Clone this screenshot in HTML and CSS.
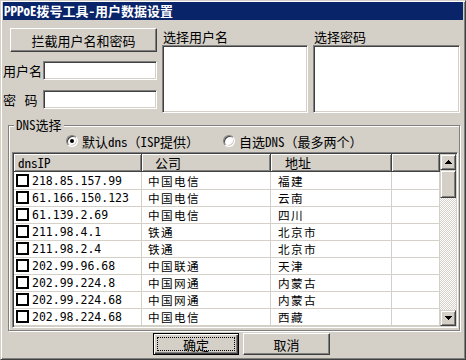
FILE: index.html
```html
<!DOCTYPE html>
<html lang="zh-CN">
<head>
<meta charset="utf-8">
<title>PPPoE拨号工具-用户数据设置</title>
<link rel="stylesheet" href="styles.css">
</head>
<body>
<div class="window">
  <div class="titlebar">PPPoE拨号工具-用户数据设置</div>
  <div class="content">
    <div class="top">
      <div class="leftcol">
        <button class="btn intercept">拦截用户名和密码</button>
        <div class="field"><span class="lbl">用户名</span><span class="edit"></span></div>
        <div class="field f2"><span class="lbl sp">密 码</span><span class="edit"></span></div>
      </div>
      <div class="pick users"><div class="plbl">选择用户名</div><div class="listbox edit"></div></div>
      <div class="pick pwds"><div class="plbl">选择密码</div><div class="listbox edit"></div></div>
    </div>
    <fieldset class="group">
      <legend>DNS选择</legend>
      <div class="radios">
        <span class="radio checked"></span><span class="rtext">默认dns（ISP提供）</span>
        <span class="radio r2"></span><span class="rtext">自选DNS（最多两个）</span>
      </div>
      <div class="listview">
        <div class="lv-main">
          <div class="lv-head">
            <div class="hc c1">dnsIP</div>
            <div class="hc c2">公司</div>
            <div class="hc c3">地址</div>
            <div class="hc c4"></div>
          </div>
          <div class="row"><div class="cell c1"><span class="chk"></span><span class="ip">218.85.157.99</span></div><div class="cell c2">中国电信</div><div class="cell c3">福建</div><div class="cell c4"></div></div>
          <div class="row"><div class="cell c1"><span class="chk"></span><span class="ip">61.166.150.123</span></div><div class="cell c2">中国电信</div><div class="cell c3">云南</div><div class="cell c4"></div></div>
          <div class="row"><div class="cell c1"><span class="chk"></span><span class="ip">61.139.2.69</span></div><div class="cell c2">中国电信</div><div class="cell c3">四川</div><div class="cell c4"></div></div>
          <div class="row"><div class="cell c1"><span class="chk"></span><span class="ip">211.98.4.1</span></div><div class="cell c2">铁通</div><div class="cell c3">北京市</div><div class="cell c4"></div></div>
          <div class="row"><div class="cell c1"><span class="chk"></span><span class="ip">211.98.2.4</span></div><div class="cell c2">铁通</div><div class="cell c3">北京市</div><div class="cell c4"></div></div>
          <div class="row"><div class="cell c1"><span class="chk"></span><span class="ip">202.99.96.68</span></div><div class="cell c2">中国联通</div><div class="cell c3">天津</div><div class="cell c4"></div></div>
          <div class="row"><div class="cell c1"><span class="chk"></span><span class="ip">202.99.224.8</span></div><div class="cell c2">中国网通</div><div class="cell c3">内蒙古</div><div class="cell c4"></div></div>
          <div class="row"><div class="cell c1"><span class="chk"></span><span class="ip">202.99.224.68</span></div><div class="cell c2">中国网通</div><div class="cell c3">内蒙古</div><div class="cell c4"></div></div>
          <div class="row"><div class="cell c1"><span class="chk"></span><span class="ip">202.98.224.68</span></div><div class="cell c2">中国电信</div><div class="cell c3">西藏</div><div class="cell c4"></div></div>
        </div>
        <div class="scrollbar">
          <div class="sb-btn"><svg width="7" height="4" viewBox="0 0 7 4"><path d="M3 0h1v1h1v1h1v1h1v1H0V3h1V2h1V1h1z"/></svg></div>
          <div class="sb-thumb"></div>
          <div class="sb-track"></div>
          <div class="sb-btn"><svg width="7" height="4" viewBox="0 0 7 4"><path d="M0 0h7v1H6v1H5v1H4v1H3V3H2V2H1V1H0z"/></svg></div>
        </div>
      </div>
    </fieldset>
    <div class="actions">
      <button class="btn ok">确定</button>
      <button class="btn cancel">取消</button>
    </div>
  </div>
</div>
</body>
</html>
```

FILE: styles.css
```css
html, body {
  margin: 0;
  padding: 0;
  background: #d4d0c8;
}
body {
  font-family: "Noto Sans Mono CJK SC", "Noto Sans CJK SC", "DejaVu Sans Mono", monospace;
  font-size: 13px;
  color: #000;
}
.window {
  width: 466px;
  height: 360px;
  box-sizing: border-box;
  background: #d4d0c8;
  border: 1px solid;
  border-color: #d4d0c8 #404040 #404040 #d4d0c8;
  box-shadow: inset 1px 1px #fff, inset -1px -1px #808080;
  padding: 1px 2px 2px 2px;
}
.titlebar {
  height: 18px;
  line-height: 18px;
  background: #0a246a;
  color: #fff;
  font-weight: bold;
  padding-left: 1px;
  white-space: nowrap;
}
.content {
  display: flex;
  flex-direction: column;
}
.top {
  display: flex;
  gap: 5px;
  padding-top: 8px;
}
.leftcol {
  width: 154px;
  display: flex;
  flex-direction: column;
}
.btn {
  box-sizing: border-box;
  background: #d4d0c8;
  border: 1px solid;
  border-color: #fff #404040 #404040 #fff;
  box-shadow: inset -1px -1px #808080, inset 1px 1px #d4d0c8;
  font: inherit;
  color: #000;
  padding: 0;
  margin: 0;
}
.intercept {
  margin-left: 7px;
  width: 147px;
  height: 24px;
}
.field {
  display: flex;
  align-items: center;
  margin-top: 9px;
}
.field.f2 {
  margin-top: 10px;
}
.lbl {
  width: 40px;
  white-space: pre;
  line-height: 17px;
}
.lbl.sp {
  word-spacing: 2px;
}
.edit {
  box-sizing: border-box;
  display: block;
  background: #fff;
  border: 1px solid;
  border-color: #808080 #fff #fff #808080;
  box-shadow: inset 1px 1px #404040, inset -1px -1px #d4d0c8;
}
.field .edit {
  width: 114px;
  height: 19px;
}
.pick.users {
  width: 146px;
}
.pick.pwds {
  width: 147px;
}
.plbl {
  height: 17px;
  line-height: 17px;
  padding-left: 1px;
}
.listbox {
  height: 68px;
}
.group {
  box-sizing: border-box;
  width: 452px;
  margin: 5px 0 0 5px;
  padding: 0 1px 2px 3px;
  border: 1px solid #808080;
  box-shadow: inset 1px 1px #fff, 1px 1px #fff;
  min-width: 0;
}
.group legend {
  margin-left: 2px;
  padding: 0 2px;
  line-height: 14px;
  background: #d4d0c8;
}
.radios {
  height: 18px;
  display: flex;
  align-items: center;
  padding-left: 54px;
}
.radio {
  box-sizing: border-box;
  width: 12px;
  height: 12px;
  border-radius: 50%;
  border: 1px solid;
  border-color: #808080 #fff #fff #808080;
  box-shadow: inset 1px 1px #404040, inset -1px -1px #d4d0c8;
  background: #fff;
  margin-right: 4px;
  display: flex;
  align-items: center;
  justify-content: center;
}
.radio.checked::after {
  content: "";
  width: 4px;
  height: 4px;
  border-radius: 50%;
  background: #000;
}
.radio.r2 {
  margin-left: 24px;
}
.rtext {
  line-height: 17px;
}
.listview {
  margin-top: 2px;
  height: 176px;
  box-sizing: border-box;
  display: flex;
  background: #fff;
  border: 1px solid;
  border-color: #808080 #fff #fff #808080;
  box-shadow: inset 1px 1px #404040, inset -1px -1px #d4d0c8;
  padding: 1px;
}
.lv-main {
  width: 426px;
}
.lv-head, .row {
  display: grid;
  grid-template-columns: 128px 129px 121px 48px;
}
.lv-head {
  height: 18px;
}
.hc {
  box-sizing: border-box;
  background: #d4d0c8;
  border-right: 1px solid #404040;
  border-bottom: 1px solid #404040;
  box-shadow: inset 1px 1px #fff, inset -1px -1px #808080;
  line-height: 17px;
  white-space: nowrap;
}
.hc.c1 { padding-left: 4px; }
.hc.c2 { padding-left: 13px; }
.hc.c3 { padding-left: 14px; }
.row {
  height: 17px;
}
.cell {
  box-sizing: border-box;
  border-right: 1px solid #d4d0c8;
  border-bottom: 1px solid #d4d0c8;
  line-height: 16px;
  white-space: nowrap;
  display: flex;
  align-items: center;
}
.cell.c1 { padding-left: 2px; }
.cell.c2 { padding-left: 6px; }
.cell.c3 { padding-left: 7px; }
.cell.c2, .cell.c3 {
  font-size: 11.6px;
  letter-spacing: 1.4px;
  padding-top: 1px;
}
.ip {
  font-family: "DejaVu Sans Mono", "Liberation Mono", monospace;
  font-size: 11.5px;
  line-height: 14px;
  padding-top: 1px;
}
.chk {
  box-sizing: border-box;
  width: 13px;
  height: 13px;
  border: 2px solid #000;
  background: #fff;
  margin-right: 3px;
  flex: none;
}
.scrollbar {
  width: 16px;
  display: flex;
  flex-direction: column;
}
.sb-btn, .sb-thumb {
  box-sizing: border-box;
  background: #d4d0c8;
  border: 1px solid;
  border-color: #d4d0c8 #404040 #404040 #d4d0c8;
  box-shadow: inset 1px 1px #fff, inset -1px -1px #808080;
}
.sb-btn {
  height: 16px;
  display: flex;
  align-items: center;
  justify-content: center;
}
.sb-btn svg {
  display: block;
  fill: #000;
}
.sb-thumb {
  height: 28px;
}
.sb-track {
  flex: 1;
  background: repeating-conic-gradient(#d4d0c8 0 25%, #fff 0 50%) 0 0 / 2px 2px;
}
.actions {
  display: flex;
  margin-top: 2px;
  padding-left: 150px;
  gap: 4px;
}
.ok {
  width: 86px;
  height: 22px;
  border: 1px solid #000;
  box-shadow: inset 1px 1px #fff, inset -1px -1px #404040, inset -2px -2px #808080;
  outline: 1px dotted #000;
  outline-offset: -5px;
}
.cancel {
  width: 87px;
  height: 22px;
}
```
